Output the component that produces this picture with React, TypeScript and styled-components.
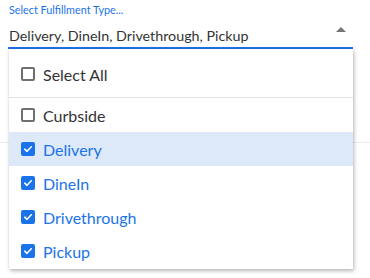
import React from "react";
import styled, { createGlobalStyle } from "styled-components";

const Global = createGlobalStyle`
  html, body { margin: 0; padding: 0; background: #fff; }
  body { font-family: Lato, "Open Sans", sans-serif; }
  * { box-sizing: border-box; }
`;

const Page = styled.div`
  position: relative;
  width: 370px;
  height: 278px;
  overflow: hidden;
`;

const Field = styled.div`
  position: relative;
  margin-left: 8px;
  width: 345px;
  padding-top: 3px;
`;

const Label = styled.div`
  font-size: 10.8px;
  line-height: 14px;
  color: #1a73e8;
  padding-left: 1px;
`;

const SelectBox = styled.div`
  display: flex;
  align-items: center;
  justify-content: space-between;
  height: 32px;
  padding: 6px 7px 0 1px;
  border-bottom: 2px solid #1a73e8;
`;

const Value = styled.span`
  font-size: 14.3px;
  color: #333;
  white-space: nowrap;
`;

const Arrow = styled.span`
  width: 0;
  height: 0;
  border-left: 5px solid transparent;
  border-right: 5px solid transparent;
  border-bottom: 5px solid #757575;
  margin-top: -12px;
`;

const BackLine = styled.div`
  margin-top: 93px;
  height: 1px;
  background: #ececec;
`;

const Menu = styled.div`
  position: absolute;
  left: 1px;
  top: 49px;
  width: 344px;
  background: #fff;
  padding: 8px 0 1px;
  box-shadow: 1px 2px 4px rgba(0, 0, 0, 0.28), 0 0 1px rgba(0, 0, 0, 0.12);
  z-index: 2;
`;

const Row = styled.div<{ $active?: boolean; $checked?: boolean }>`
  display: flex;
  align-items: center;
  gap: 8px;
  height: 34px;
  padding-left: 12px;
  background: ${(p) => (p.$active ? "#dde9f8" : "transparent")};
  color: ${(p) => (p.$checked ? "#1a73e8" : "#333")};
  font-size: 16px;
`;

const Divider = styled.div`
  height: 1px;
  margin-top: 6px;
  background: #e2e2e2;
`;

const Box = styled.span<{ $checked?: boolean }>`
  display: inline-flex;
  align-items: center;
  justify-content: center;
  flex: none;
  width: 14px;
  height: 14px;
  border-radius: 2px;
  border: ${(p) => (p.$checked ? "none" : "2px solid #707070")};
  background: ${(p) => (p.$checked ? "#1a73e8" : "#fff")};
`;

const Check = () => (
  <svg width="10" height="10" viewBox="0 0 10 10">
    <path d="M1.8 5.2 L4 7.3 L8.3 2.8" fill="none" stroke="#fff" strokeWidth="1.6" strokeLinecap="round" strokeLinejoin="round" />
  </svg>
);

const Item = ({ label, checked, active }: { label: string; checked?: boolean; active?: boolean }) => (
  <Row $checked={checked} $active={active}>
    <Box $checked={checked}>{checked && <Check />}</Box>
    <span>{label}</span>
  </Row>
);

export default function App() {
  return (
    <Page>
      <Global />
      <Field>
        <Label>Select Fulfillment Type...</Label>
        <SelectBox>
          <Value>Delivery, DineIn, Drivethrough, Pickup</Value>
          <Arrow />
        </SelectBox>
        <Menu>
          <Item label="Select All" />
          <Divider />
          <Item label="Curbside" />
          <Item label="Delivery" checked active />
          <Item label="DineIn" checked />
          <Item label="Drivethrough" checked />
          <Item label="Pickup" checked />
        </Menu>
      </Field>
      <BackLine />
    </Page>
  );
}
